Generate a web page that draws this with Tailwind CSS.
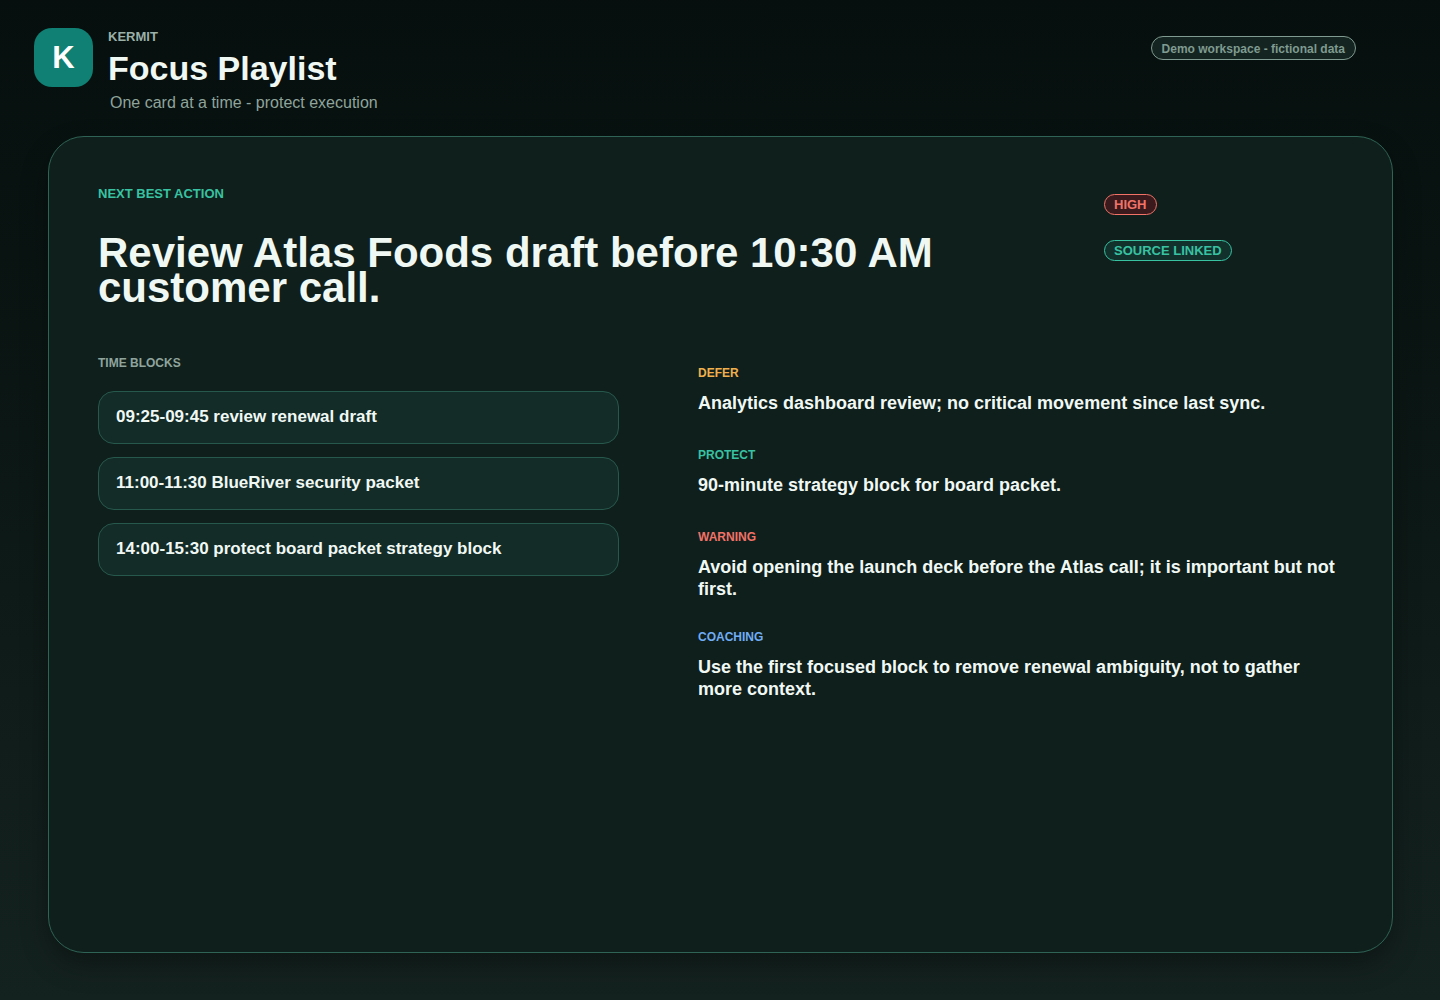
<!DOCTYPE html>
<html lang="en">
<head>
  <meta charset="UTF-8" />
  <meta name="viewport" content="width=device-width, initial-scale=1.0" />
  <title>Kermit - Focus Playlist</title>
  <script src="https://cdn.jsdelivr.net/npm/@tailwindcss/browser@4"></script>
</head>
<body class="min-h-screen flex flex-col bg-linear-to-b from-[#060f0d] to-[#14221f] font-['Liberation_Sans',Arial,sans-serif] text-[#f0f8f4]">
  <header class="flex items-start justify-between pt-7 pl-[34px] pr-21">
    <div class="flex gap-[15px]">
      <div class="size-[59px] shrink-0 pt-px rounded-[18px] bg-[#0f8073] text-white text-[31px] font-bold flex items-center justify-center">K</div>
      <div class="pt-px">
        <p class="text-[13px] leading-4 font-bold text-[#9bb0a8]">KERMIT</p>
        <h1 class="mt-[3px] text-[34px] leading-10 font-bold">Focus Playlist</h1>
        <p class="mt-[3px] pl-0.5 text-base leading-6 text-[#8fa49c]">One card at a time - protect execution</p>
      </div>
    </div>
    <span class="mt-2 h-6 px-[10px] pt-px flex items-center rounded-full border border-[#7f9a90] bg-[#142420] text-xs font-bold text-[#7f9a90]">Demo workspace - fictional data</span>
  </header>

  <main class="grow mt-[21px] ml-12 mr-[47px] mb-[47px] px-[49px] pt-[49px] pb-12 rounded-[36px] border border-[#2f6355] bg-[#0f1f1c] shadow-[0_12px_28px_rgb(0_0_0/0.3)]">
    <div class="flex justify-between">
      <div class="max-w-[880px]">
        <p class="text-[13px] leading-4 font-bold text-[#38c2a2]">NEXT BEST ACTION</p>
        <h2 class="mt-[33px] text-[42px] leading-[35px] font-bold">Review Atlas Foods draft before 10:30 AM customer call.</h2>
      </div>
      <div class="w-[239px] pt-2 flex flex-col items-start gap-[25px]">
        <span class="h-[21px] px-[9px] pt-px flex items-center rounded-full border border-[#f27268] bg-[#3a1a1c] text-[13px] font-bold text-[#f27268]">HIGH</span>
        <span class="h-[21px] px-[9px] pt-px flex items-center rounded-full border border-[#38c2a2] bg-[#12312d] text-[13px] font-bold text-[#38c2a2]">SOURCE LINKED</span>
      </div>
    </div>

    <div class="mt-[50px] grid grid-cols-[521fr_645fr] gap-[79px]">
      <section>
        <h3 class="text-xs font-bold text-[#8fa49c]">TIME BLOCKS</h3>
        <ul class="mt-5 space-y-[13px] text-[17px] leading-5 font-bold">
          <li class="h-[53px] px-[17px] pt-[15px] rounded-[16px] border border-[#27584c] bg-[#132c28]">09:25-09:45 review renewal draft</li>
          <li class="h-[53px] px-[17px] pt-[15px] rounded-[16px] border border-[#27584c] bg-[#132c28]">11:00-11:30 BlueRiver security packet</li>
          <li class="h-[53px] px-[17px] pt-[15px] rounded-[16px] border border-[#27584c] bg-[#132c28]">14:00-15:30 protect board packet strategy block</li>
        </ul>
      </section>

      <section class="pt-[10px] space-y-7 text-lg leading-[22px] font-bold">
        <div>
          <h3 class="text-xs text-[#f0b04e]">DEFER</h3>
          <p class="mt-[11px] min-h-[27px]">Analytics dashboard review; no critical movement since last sync.</p>
        </div>
        <div>
          <h3 class="text-xs text-[#38c2a2]">PROTECT</h3>
          <p class="mt-[11px] min-h-[27px]">90-minute strategy block for board packet.</p>
        </div>
        <div>
          <h3 class="text-xs text-[#f27268]">WARNING</h3>
          <p class="mt-[11px] pb-px">Avoid opening the launch deck before the Atlas call; it is important but not first.</p>
        </div>
        <div>
          <h3 class="text-xs text-[#70adf5]">COACHING</h3>
          <p class="mt-[11px] pb-px">Use the first focused block to remove renewal ambiguity, not to gather more context.</p>
        </div>
      </section>
    </div>
  </main>
</body>
</html>
